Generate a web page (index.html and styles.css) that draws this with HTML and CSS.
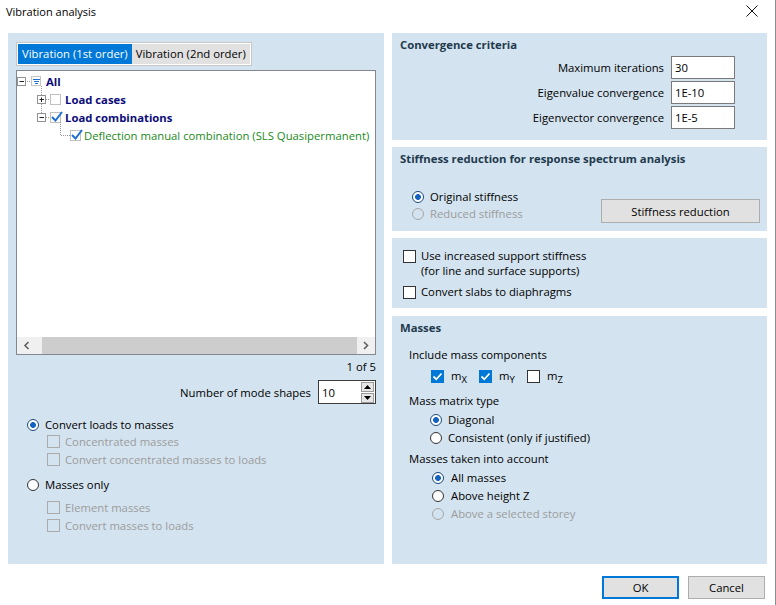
FILE: index.html
```html
<!DOCTYPE html>
<html lang="en">
<head>
    <meta charset="UTF-8">
    <title>Vibration analysis</title>
    <link rel="stylesheet" href="styles.css">
</head>
<body>
<div class="dialog">
    <div class="titlebar">
        <span class="title">Vibration analysis</span>
        <svg class="close" width="12" height="12" viewBox="0 0 12 12">
            <path d="M0.5 0.5 L11.5 11.5 M11.5 0.5 L0.5 11.5" stroke="#111" stroke-width="1" fill="none"/>
        </svg>
    </div>

    <div class="content">
        <!-- left side: load selection and mass conversion -->
        <div class="panel left-panel">
            <div class="tabs">
                <div class="tab active">Vibration (1st order)</div>
                <div class="tab">Vibration (2nd order)</div>
            </div>

            <div class="tree">
                <div class="tree-rows">
                    <div class="tree-row">
                        <svg width="29" height="18" viewBox="0 0 29 18">
                            <path d="M10 9.5 H14 M24.5 14 V18" stroke="#999" stroke-dasharray="1 1" fill="none"/>
                            <rect x="0.5" y="5.5" width="8" height="8" fill="#fff" stroke="#929292"/>
                            <path d="M2.5 9.5 H7" stroke="#222"/>
                            <rect x="14.5" y="4.5" width="9" height="9" fill="none" stroke="#8a8a8a" stroke-dasharray="1 1"/>
                            <path d="M16 7.5 H23 M17 9.5 H22 M18 11.5 H21" stroke="#1c6fd6"/>
                        </svg>
                        <span class="node node-root">All</span>
                    </div>
                    <div class="tree-row">
                        <svg width="48" height="18" viewBox="0 0 48 18">
                            <path d="M24.5 0 V18 M29 9.5 H33" stroke="#999" stroke-dasharray="1 1" fill="none"/>
                            <rect x="20.5" y="5.5" width="8" height="8" fill="#fff" stroke="#929292"/>
                            <path d="M22.5 9.5 H27 M24.5 7.5 V12" stroke="#222"/>
                            <rect x="33.5" y="4.5" width="10" height="10" fill="none" stroke="#808080" stroke-dasharray="1 1"/>
                        </svg>
                        <span class="node">Load cases</span>
                    </div>
                    <div class="tree-row">
                        <svg width="48" height="18" viewBox="0 0 48 18">
                            <path d="M24.5 0 V5 M29 9.5 H33 M43.5 14 V18" stroke="#999" stroke-dasharray="1 1" fill="none"/>
                            <rect x="20.5" y="5.5" width="8" height="8" fill="#fff" stroke="#929292"/>
                            <path d="M22.5 9.5 H27" stroke="#222"/>
                            <rect x="33.5" y="4.5" width="10" height="10" fill="none" stroke="#808080" stroke-dasharray="1 1"/>
                            <path d="M35 9 L38.5 12.5 L45 4" stroke="#1c6fd6" stroke-width="2" fill="none"/>
                        </svg>
                        <span class="node">Load combinations</span>
                    </div>
                    <div class="tree-row">
                        <svg width="67" height="18" viewBox="0 0 67 18">
                            <path d="M43.5 0 V9.5 H53" stroke="#999" stroke-dasharray="1 1" fill="none"/>
                            <rect x="53.5" y="4.5" width="10" height="10" fill="none" stroke="#808080" stroke-dasharray="1 1"/>
                            <path d="M55 9 L58.5 12.5 L65 4" stroke="#1c6fd6" stroke-width="2" fill="none"/>
                        </svg>
                        <span class="node node-leaf">Deflection manual combination (SLS Quasipermanent)</span>
                    </div>
                </div>
                <div class="hscroll">
                    <svg class="arrow" width="25" height="17" viewBox="0 0 25 17">
                        <path d="M11.5 5 L8 8.5 L11.5 12" stroke="#606060" stroke-width="1.6" fill="none"/>
                    </svg>
                    <div class="thumb"></div>
                    <svg class="arrow" width="18" height="17" viewBox="0 0 18 17">
                        <path d="M7 5 L10.5 8.5 L7 12" stroke="#606060" stroke-width="1.6" fill="none"/>
                    </svg>
                </div>
            </div>

            <div class="page-count">1 of 5</div>

            <div class="spin-row">
                <span>Number of mode shapes</span>
                <div class="spin">
                    <span class="spin-value">10</span>
                    <div class="spin-btns">
                        <div class="spin-btn">
                            <svg width="7" height="4" viewBox="0 0 7 4"><path d="M0 4 L3.5 0 L7 4 Z" fill="#000"/></svg>
                        </div>
                        <div class="spin-btn">
                            <svg width="7" height="4" viewBox="0 0 7 4"><path d="M0 0 L3.5 4 L7 0 Z" fill="#000"/></svg>
                        </div>
                    </div>
                </div>
            </div>

            <div class="mass-source">
                <div class="opt"><span class="radio checked"></span>Convert loads to masses</div>
                <div class="sub-opt disabled"><span class="check"></span>Concentrated masses</div>
                <div class="sub-opt disabled"><span class="check"></span>Convert concentrated masses to loads</div>
                <div class="opt opt-gap"><span class="radio"></span>Masses only</div>
                <div class="sub-opt disabled first"><span class="check"></span>Element masses</div>
                <div class="sub-opt disabled"><span class="check"></span>Convert masses to loads</div>
            </div>
        </div>

        <!-- right side: solver settings -->
        <div class="right-col">
            <div class="panel conv-panel">
                <div class="panel-title">Convergence criteria</div>
                <div class="field-row">
                    <span>Maximum iterations</span>
                    <div class="field">30</div>
                </div>
                <div class="field-row">
                    <span>Eigenvalue convergence</span>
                    <div class="field">1E-10</div>
                </div>
                <div class="field-row">
                    <span>Eigenvector convergence</span>
                    <div class="field">1E-5</div>
                </div>
            </div>

            <div class="panel stiff-panel">
                <div class="panel-title">Stiffness reduction for response spectrum analysis</div>
                <div class="stiff-body">
                    <div class="stiff-options">
                        <div class="opt"><span class="radio checked"></span>Original stiffness</div>
                        <div class="opt disabled"><span class="radio"></span>Reduced stiffness</div>
                    </div>
                    <button class="btn stiff-btn">Stiffness reduction</button>
                </div>
            </div>

            <div class="panel support-panel">
                <div class="check-row">
                    <span class="check"></span>
                    <span>Use increased support stiffness<br>(for line and surface supports)</span>
                </div>
                <div class="check-row slabs">
                    <span class="check"></span>
                    <span>Convert slabs to diaphragms</span>
                </div>
            </div>

            <div class="panel mass-panel">
                <div class="panel-title">Masses</div>
                <div class="group-label">Include mass components</div>
                <div class="components">
                    <div class="component">
                        <span class="check checked">
                            <svg width="11" height="11" viewBox="0 0 11 11"><path d="M1.5 5.5 L4.3 8.3 L9.5 2.5" stroke="#fff" stroke-width="1.8" fill="none"/></svg>
                        </span>
                        <span>m<sub>X</sub></span>
                    </div>
                    <div class="component">
                        <span class="check checked">
                            <svg width="11" height="11" viewBox="0 0 11 11"><path d="M1.5 5.5 L4.3 8.3 L9.5 2.5" stroke="#fff" stroke-width="1.8" fill="none"/></svg>
                        </span>
                        <span>m<sub>Y</sub></span>
                    </div>
                    <div class="component">
                        <span class="check"></span>
                        <span>m<sub>Z</sub></span>
                    </div>
                </div>

                <div class="group-label matrix-label">Mass matrix type</div>
                <div class="radio-list matrix">
                    <div class="opt"><span class="radio checked"></span>Diagonal</div>
                    <div class="opt"><span class="radio"></span>Consistent (only if justified)</div>
                </div>

                <div class="group-label account-label">Masses taken into account</div>
                <div class="radio-list account">
                    <div class="opt"><span class="radio checked"></span>All masses</div>
                    <div class="opt"><span class="radio"></span>Above height Z</div>
                    <div class="opt disabled"><span class="radio"></span>Above a selected storey</div>
                </div>
            </div>
        </div>
    </div>

    <div class="footer">
        <button class="btn default">OK</button>
        <button class="btn">Cancel</button>
    </div>
</div>
</body>
</html>
```

FILE: styles.css
```css
body {
    margin: 0;
    background-color: #fff;
    font-family: "Open Sans", "Noto Sans", sans-serif;
    font-size: 11.3px;
    color: #000;
}
.dialog {
    width: 775px;
    height: 605px;
    border-right: 1px solid #8c8c8c;
    display: flex;
    flex-direction: column;
}
.titlebar {
    height: 33px;
    display: flex;
    justify-content: space-between;
    align-items: flex-start;
    padding: 3px 17px 0 6px;
    box-sizing: border-box;
}
.title {
    font-size: 11px;
    line-height: 18px;
}
.close {
    margin-top: 2px;
}
.content {
    display: flex;
    gap: 8px;
    padding: 0 8px;
    height: 531px;
}
.panel {
    background-color: #d3e3ef;
    box-sizing: border-box;
}
.panel-title {
    font-weight: 700;
    color: #1f3a4d;
    line-height: 16px;
}

/* left panel */
.left-panel {
    width: 376px;
    padding: 9px 8px 0 8px;
}
.tabs {
    display: inline-flex;
    border: 1px solid #c6c6c6;
    padding: 1px;
    background-color: #fff;
}
.tab {
    height: 20px;
    line-height: 20px;
    padding: 0 4px;
    background-color: #e1e1e1;
}
.tab.active {
    background-color: #0078d7;
    color: #fff;
}
.tree {
    margin-top: 4px;
    height: 285px;
    border: 1px solid #828790;
    background-color: #fff;
    box-sizing: border-box;
    display: flex;
    flex-direction: column;
}
.tree-rows {
    flex: 1;
    padding-top: 1px;
}
.tree-row {
    display: flex;
    align-items: center;
    height: 18px;
}
.tree-row svg {
    flex: none;
}
.node {
    font-weight: 700;
    color: #0c0c7a;
}
.node-leaf {
    font-weight: 400;
    color: #1a8a1a;
}
.hscroll {
    height: 17px;
    display: flex;
    background-color: #f0f0f0;
}
.thumb {
    flex: 1;
    background-color: #cdcdcd;
}
.page-count {
    margin-top: 4px;
    text-align: right;
    line-height: 16px;
}
.spin-row {
    margin-top: 5px;
    display: flex;
    justify-content: flex-end;
    align-items: center;
    gap: 7px;
}
.spin {
    width: 58px;
    height: 24px;
    border: 1px solid #3c3c3c;
    background-color: #fff;
    box-sizing: border-box;
    display: flex;
    align-items: center;
    justify-content: space-between;
    padding: 0 1px 0 3px;
}
.spin-btns {
    display: flex;
    flex-direction: column;
    gap: 1px;
}
.spin-btn {
    width: 11px;
    height: 8px;
    border: 1px solid #9a9a9a;
    background-color: #e6e6e6;
    display: flex;
    align-items: center;
    justify-content: center;
}
.mass-source {
    margin-top: 12px;
    padding-left: 11px;
}
.opt, .sub-opt {
    display: flex;
    align-items: center;
    line-height: 17px;
}
.opt .radio {
    margin-right: 6px;
}
.opt-gap {
    margin-top: 8px;
}
.sub-opt {
    padding-left: 20px;
}
.sub-opt .check {
    margin-right: 5px;
}
.sub-opt.first {
    margin-top: 6px;
}
.sub-opt + .sub-opt {
    margin-top: 1px;
}
.disabled {
    color: #9c9c9c;
}

/* form controls */
.radio {
    width: 12px;
    height: 12px;
    border: 1px solid #333;
    border-radius: 50%;
    background-color: #fff;
    box-sizing: border-box;
    flex: none;
}
.radio.checked {
    border-color: #1d4a7c;
    background: radial-gradient(circle, #1462c2 0 2.6px, #fff 3.2px);
}
.disabled .radio {
    border-color: #a6a6a6;
    background: transparent;
}
.check {
    width: 13px;
    height: 13px;
    border: 1px solid #333;
    background-color: #fff;
    box-sizing: border-box;
    flex: none;
    display: flex;
    align-items: center;
    justify-content: center;
}
.check.checked {
    border-color: #0078d7;
    background-color: #0078d7;
}
.disabled .check {
    border-color: #ababab;
    background-color: transparent;
}
.btn {
    font-family: inherit;
    font-size: 11.3px;
    height: 23px;
    width: 77px;
    background-color: #e1e1e1;
    border: 1px solid #adadad;
    padding: 0;
    color: #000;
}
.btn.default {
    border: 2px solid #0078d7;
}

/* right column */
.right-col {
    width: 375px;
    display: flex;
    flex-direction: column;
    gap: 7px;
}
.conv-panel {
    height: 107px;
    padding: 4px 32px 0 8px;
}
.field-row {
    display: flex;
    justify-content: flex-end;
    align-items: center;
    gap: 7px;
    height: 23px;
    margin-bottom: 2px;
}
.conv-panel .panel-title {
    margin-bottom: 3px;
}
.field {
    width: 64px;
    height: 23px;
    line-height: 21px;
    border: 1px solid #7a7a7a;
    background-color: #fff;
    box-sizing: border-box;
    padding-left: 3px;
}
.stiff-panel {
    height: 84px;
    padding: 4px 7px 0 8px;
}
.stiff-body {
    margin-top: 21px;
    display: flex;
    align-items: flex-end;
}
.stiff-options {
    padding-left: 12px;
    padding-bottom: 1px;
}
.stiff-btn {
    margin-left: auto;
    width: 159px;
    height: 24px;
}
.support-panel {
    height: 70px;
    padding: 10px 8px 0 11px;
}
.check-row {
    display: flex;
    align-items: flex-start;
    gap: 5px;
    line-height: 15px;
}
.check-row .check {
    margin-top: 2px;
}
.check-row.slabs {
    margin-top: 6px;
}
.mass-panel {
    flex: 1;
    margin-top: 1px;
    padding: 4px 8px 0 8px;
}
.group-label {
    padding-left: 9px;
    line-height: 16px;
    margin-top: 11px;
}
.components {
    display: flex;
    padding-left: 31px;
    margin-top: 5px;
    line-height: 16px;
}
.component {
    width: 48px;
    display: flex;
    align-items: center;
    gap: 7px;
}
.component sub {
    font-size: 9.5px;
    vertical-align: -3px;
    line-height: 0;
}
.matrix-label {
    margin-top: 9px;
}
.radio-list .opt {
    line-height: 18px;
}
.matrix {
    padding-left: 30px;
    margin-top: 2px;
}
.account-label {
    margin-top: 4px;
}
.account {
    padding-left: 32px;
    margin-top: 2px;
}
.account .radio {
    margin-right: 7px;
}
.footer {
    display: flex;
    justify-content: flex-end;
    gap: 9px;
    padding: 12px 10px 0 0;
}
```
